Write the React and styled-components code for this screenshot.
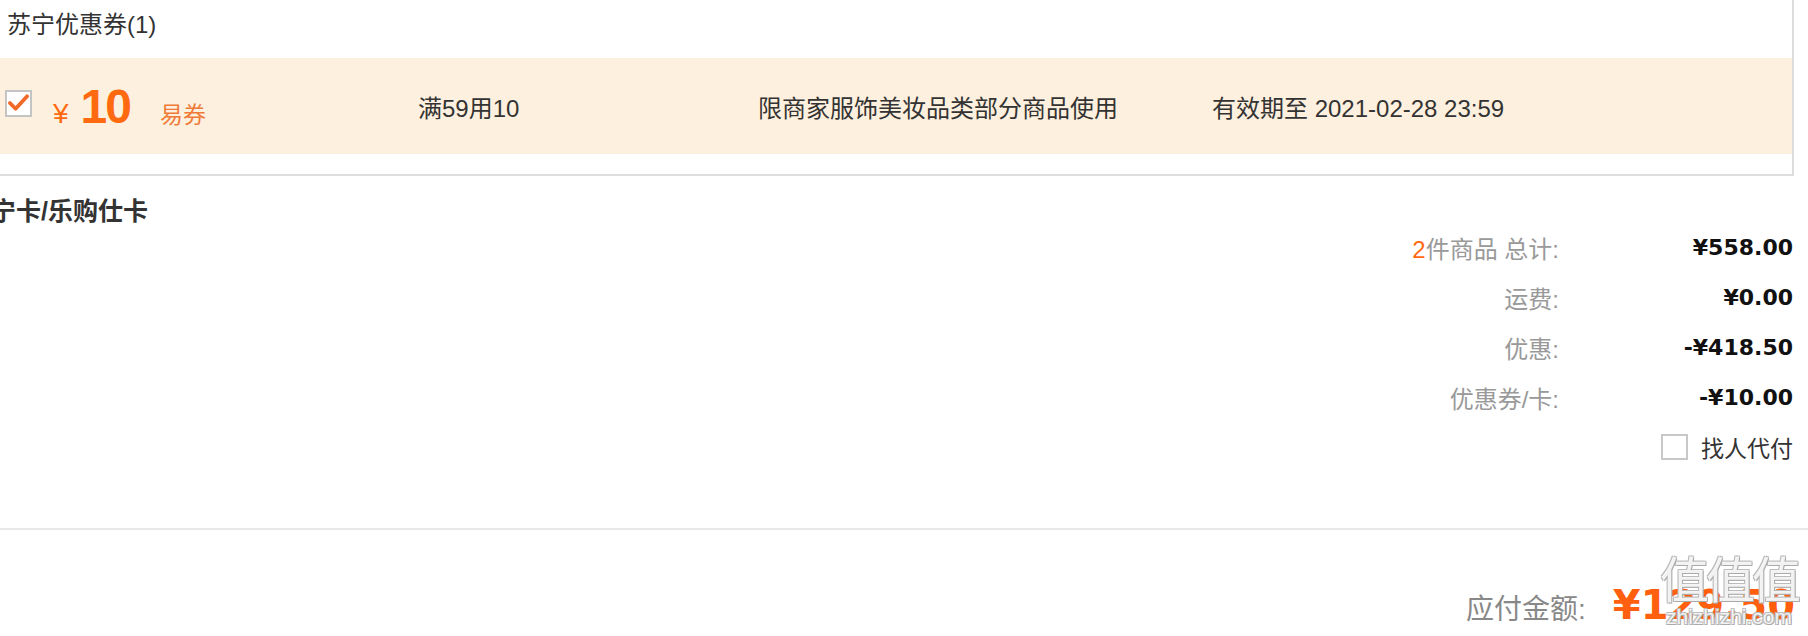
import React from "react";
import styled, { createGlobalStyle } from "styled-components";

const GlobalStyle = createGlobalStyle`
  html, body {
    margin: 0;
    padding: 0;
    background: #fff;
    overflow: hidden;
  }
  body {
    font-family: "Liberation Sans", "Noto Sans CJK SC", sans-serif;
    color: #333;
  }
`;

const Page = styled.div`
  position: relative;
  width: 1808px;
  height: 636px;
  overflow: hidden;
`;

const CouponBox = styled.div`
  margin: -2px 0 0 -2px;
  width: 1792px;
  border: 2px solid #ddd;
  border-top-color: #eee;
  padding-bottom: 20px;
`;

const BoxTitle = styled.div`
  height: 58px;
  line-height: 50px;
  padding-left: 7px;
  font-size: 24px;
  color: #333;
`;

const CouponRow = styled.div`
  display: grid;
  grid-template-columns: 418px 340px 454px 1fr;
  align-items: center;
  height: 96px;
  background: #fdf0de;
  font-size: 24px;
  color: #333;
`;

const Amount = styled.div`
  display: flex;
  align-items: baseline;
  padding-left: 5px;
  color: #ff6a10;
`;

const Check = styled.span`
  align-self: center;
  display: inline-flex;
  width: 27px;
  height: 27px;
  box-sizing: border-box;
  border: 2px solid #c4c4c4;
  background: #fff;
  margin-top: -6px;
  margin-right: 21px;
  svg {
    width: 24px;
    height: 22px;
  }
`;

const Yen = styled.span`
  font-size: 28px;
  margin-right: 12px;
`;

const Value = styled.span`
  font-size: 48px;
  font-weight: bold;
  letter-spacing: -2px;
  margin-right: 30px;
`;

const Kind = styled.span`
  font-size: 23px;
  color: #f07a38;
`;

const Cell = styled.div`
  white-space: nowrap;
`;

const SectionTitle = styled.div`
  margin: 20px 0 0 -34px;
  height: 30px;
  line-height: 30px;
  font-size: 25px;
  font-weight: bold;
  color: #333;
`;

const Summary = styled.div`
  display: grid;
  grid-template-columns: 1fr 234px;
  grid-auto-rows: 50px;
  align-items: center;
  margin-top: -4px;
  padding-right: 15px;
`;

const Label = styled.div`
  text-align: right;
  font-size: 24px;
  color: #999;
`;

const Orange = styled.span`
  color: #ff6a10;
`;

const Money = styled.div`
  text-align: right;
  font-family: "DejaVu Sans", sans-serif;
  font-weight: bold;
  font-size: 22px;
  color: #111;
`;

const PayOther = styled.label`
  grid-column: 2;
  display: flex;
  justify-content: flex-end;
  align-items: center;
  gap: 13px;
  font-size: 23px;
  color: #333;
`;

const Box = styled.span`
  width: 27px;
  height: 26px;
  box-sizing: border-box;
  border: 2px solid #c8c8c8;
  background: #fff;
`;

const Divider = styled.div`
  margin-top: 56px;
  height: 2px;
  background: #e8e8e8;
  box-shadow: 0 6px 0 -4px #f7f7f7;
`;

const Total = styled.div`
  display: flex;
  justify-content: flex-end;
  align-items: baseline;
  gap: 27px;
  padding: 52px 13px 0 0;
`;

const TotalLabel = styled.span`
  font-size: 28px;
  color: #888;
`;

const TotalMoney = styled.span`
  font-family: "DejaVu Sans", sans-serif;
  font-weight: bold;
  font-size: 40px;
  color: #ff5f0f;
`;

const Watermark = styled.div`
  position: absolute;
  left: 1656px;
  top: 548px;
  width: 146px;
  text-align: center;
  color: rgba(255, 255, 255, 0.85);
  text-shadow: 1px 1px 0 #aaa, -1px -1px 0 #bbb, 1px -1px 0 #bbb, -1px 1px 0 #bbb;
  pointer-events: none;
`;

const MarkGlyphs = styled.div`
  font-family: "Noto Sans CJK SC", sans-serif;
  font-size: 49px;
  line-height: 58px;
  letter-spacing: -3px;
`;

const MarkSite = styled.div`
  font-family: "Liberation Sans", sans-serif;
  font-size: 21px;
  line-height: 22px;
`;

const CheckMark = () => (
  <svg viewBox="0 0 24 22">
    <path
      d="M3 11 L9 17 L21 4"
      fill="none"
      stroke="#f26a2a"
      strokeWidth="4"
      strokeLinecap="round"
      strokeLinejoin="round"
    />
  </svg>
);

const rows = [
  { label: "件商品 总计:", count: "2", value: "¥558.00" },
  { label: "运费:", value: "¥0.00" },
  { label: "优惠:", value: "-¥418.50" },
  { label: "优惠券/卡:", value: "-¥10.00" },
];

export default function App() {
  return (
    <Page>
      <GlobalStyle />
      <CouponBox>
        <BoxTitle>苏宁优惠券(1)</BoxTitle>
        <CouponRow>
          <Amount>
            <Check>
              <CheckMark />
            </Check>
            <Yen>¥</Yen>
            <Value>10</Value>
            <Kind>易券</Kind>
          </Amount>
          <Cell>满59用10</Cell>
          <Cell>限商家服饰美妆品类部分商品使用</Cell>
          <Cell>有效期至 2021-02-28 23:59</Cell>
        </CouponRow>
      </CouponBox>
      <SectionTitle>苏宁卡/乐购仕卡</SectionTitle>
      <Summary>
        {rows.map((r) => (
          <React.Fragment key={r.label}>
            <Label>
              {r.count && <Orange>{r.count}</Orange>}
              {r.label}
            </Label>
            <Money>{r.value}</Money>
          </React.Fragment>
        ))}
        <PayOther>
          <Box />
          找人代付
        </PayOther>
      </Summary>
      <Divider />
      <Total>
        <TotalLabel>应付金额:</TotalLabel>
        <TotalMoney>¥129.50</TotalMoney>
      </Total>
      <Watermark>
        <MarkGlyphs>值值值</MarkGlyphs>
        <MarkSite>zhizhizhi.com</MarkSite>
      </Watermark>
    </Page>
  );
}
